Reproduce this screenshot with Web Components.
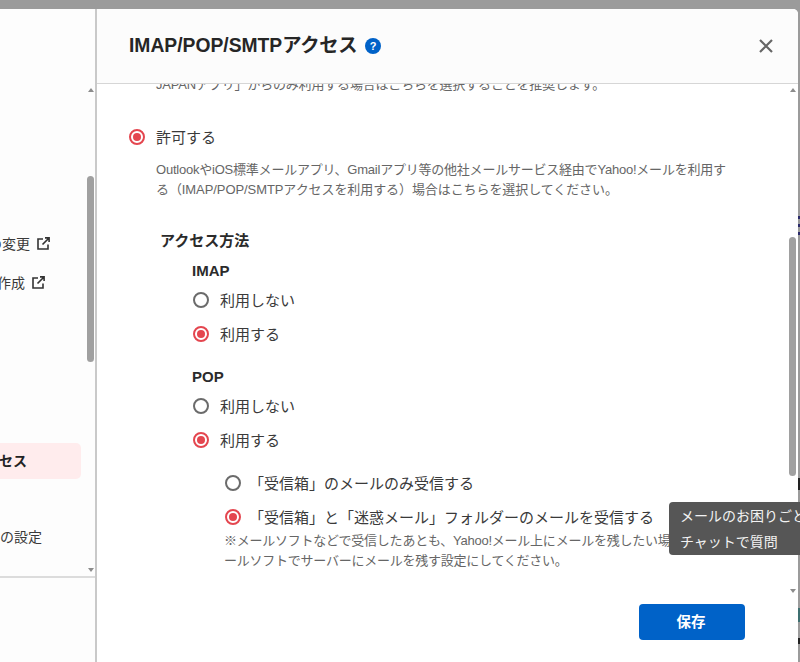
<!DOCTYPE html>
<html lang="ja">
<head>
<meta charset="utf-8">
<title>IMAP/POP/SMTPアクセス</title>
<style>
html, body { margin: 0; height: 100%; overflow: hidden; }
body { font-family: "Liberation Sans", "Noto Sans CJK JP", sans-serif; color: #333; }
</style>
</head>
<body>
<mail-shell>
  <side-nav slot="side">
    <nav-item end="30" top="149" link>メールアドレスの変更</nav-item>
    <nav-item end="25" top="19" link>エイリアスの作成</nav-item>
    <nav-item end="27" top="151" active>IMAP/POP/SMTPアクセス</nav-item>
    <nav-item end="42" top="47">そのほかの設定</nav-item>
  </side-nav>
  <access-dialog slot="main" heading="IMAP/POP/SMTP" heading-kana="アクセス">
    <div class="clipped">JAPANアプリ」からのみ利用する場合はこちらを選択することを推奨します。</div>
    <radio-row checked style="margin-top:25px">許可する</radio-row>
    <div class="desc"><span class="l1">OutlookやiOS標準メールアプリ、Gmailアプリ等の他社メールサービス経由でYahoo!メールを利用す</span><br><span class="l2">る（IMAP/POP/SMTPアクセスを利用する）場合はこちらを選択してください。</span></div>
    <div class="h-method">アクセス方法</div>
    <div class="h-proto" style="margin-top:6px">IMAP</div>
    <radio-row class="lv1">利用しない</radio-row>
    <radio-row class="lv1" checked>利用する</radio-row>
    <div class="h-proto" style="margin-top:14px">POP</div>
    <radio-row class="lv1">利用しない</radio-row>
    <radio-row class="lv1" checked>利用する</radio-row>
    <radio-row class="lv2" gap="8" style="margin-top:9px">「受信箱」のメールのみ受信する</radio-row>
    <radio-row class="lv2" gap="8" checked>「受信箱」と「迷惑メール」フォルダーのメールを受信する</radio-row>
    <div class="note">※メールソフトなどで受信したあとも、Yahoo!メール上にメールを残したい場合は、メ<br>ールソフトでサーバーにメールを残す設定にしてください。</div>
  </access-dialog>
  <chat-tip slot="tip"><div>メールのお困りごと</div><div>チャットで質問</div></chat-tip>
</mail-shell>

<script>
class MailShell extends HTMLElement {
    connectedCallback() {
        const shadow = this.attachShadow({ mode: 'open' });
        shadow.innerHTML = `
        <style>
        :host {
            display: block;
            position: relative;
            width: 800px;
            height: 662px;
            box-sizing: border-box;
            padding: 9px 2px 0 0;
            overflow: hidden;
            background:
                linear-gradient(#9b9b9b 216px, #2a2a6a 216px, #2a2a6a 219px, #9b9b9b 219px, #9b9b9b 224px, #2a2a6a 224px, #2a2a6a 227px, #9b9b9b 227px, #9b9b9b 232px, #2a2a6a 232px, #2a2a6a 235px, #9b9b9b 235px, #9b9b9b 478px, #222 478px, #222 490px, #9b9b9b 490px, #9b9b9b 608px, #3d6f70 608px, #3d6f70 622px, #9b9b9b 622px, #9b9b9b 638px, #222 638px, #222 644px, #9b9b9b 644px) right top / 2px 100% no-repeat,
                #9b9b9b;
        }
        .panel {
            display: flex;
            height: 100%;
            background: #fff;
            border-radius: 0 5px 0 0;
            overflow: hidden;
        }
        </style>
        <div class="panel"><slot name="side"></slot><slot name="main"></slot></div>
        <slot name="tip"></slot>`;
    }
}

class SideNav extends HTMLElement {
    connectedCallback() {
        const shadow = this.attachShadow({ mode: 'open' });
        shadow.innerHTML = `
        <style>
        :host {
            display: flex;
            flex-direction: column;
            flex: none;
            width: 97px;
            height: 100%;
            box-sizing: border-box;
            background: #fdfdfd;
            border-right: 2px solid #c9c9c9;
        }
        .scroll { display: flex; height: 494px; margin-top: 75px; border-bottom: 2px solid #dcdcdc; flex: none; box-sizing: border-box; }
        .list { flex: 1; min-width: 0; overflow: hidden; display: flex; flex-direction: column; }
        .foot { flex: 1; }
        </style>
        <div class="scroll">
            <div class="list"><slot></slot></div>
            <fake-scrollbar thumb-top="92" thumb-height="186" side="1"></fake-scrollbar>
        </div>
        <div class="foot"></div>`;
    }
}

class NavItem extends HTMLElement {
    connectedCallback() {
        const shadow = this.attachShadow({ mode: 'open' });
        const end = this.getAttribute('end') || '0';
        const active = this.hasAttribute('active');
        const right = active ? 81 : 87;
        shadow.innerHTML = `
        <style>
        :host { display: block; flex: none; margin-top: ${this.getAttribute('top') || 0}px; }
        .row {
            display: flex;
            justify-content: flex-end;
            align-items: center;
            gap: 7px;
            box-sizing: border-box;
            width: ${right}px;
            height: ${active ? 36 : 20}px;
            padding-right: ${right - Number(end) - (this.hasAttribute('link') ? 20 : 0)}px;
            white-space: nowrap;
            font-size: 14px;
            color: #3a3a3a;
        }
        .row.on { background: #ffeced; border-radius: 0 5px 5px 0; font-weight: bold; color: #222; padding-bottom: 3px; }
        svg { flex: none; }
        </style>
        <div class="row ${active ? 'on' : ''}">
            <span><slot></slot></span>
            ${this.hasAttribute('link') ? `<svg width="13" height="13" viewBox="0 0 13 13" fill="none" stroke="#333" stroke-width="1.6"><path d="M6 2H1v10h10V7.500"/><path d="M5.500 7.500 12 1M8 .9h4.100V5"/></svg>` : ''}
        </div>`;
    }
}

class FakeScrollbar extends HTMLElement {
    connectedCallback() {
        const shadow = this.attachShadow({ mode: 'open' });
        shadow.innerHTML = `
        <style>
        :host {
            display: flex;
            flex-direction: column;
            align-items: center;
            flex: none;
            width: 7px;
            height: 100%;
            margin-right: ${this.getAttribute('side') || 0}px;
            position: relative;
        }
        .up, .down { width: 0; height: 0; border-left: 3px solid transparent; border-right: 3px solid transparent; }
        .up { border-bottom: 4px solid #8c8c8c; margin-top: 4px; }
        .down { border-top: 4px solid #8c8c8c; margin-top: auto; margin-bottom: 4px; }
        .thumb { position: absolute; left: 0; width: 7px; border-radius: 4px; background: #a0a0a0; top: ${this.getAttribute('thumb-top')}px; height: ${this.getAttribute('thumb-height')}px; }
        </style>
        <div class="up"></div><div class="thumb"></div><div class="down"></div>`;
    }
}

class AccessDialog extends HTMLElement {
    connectedCallback() {
        const shadow = this.attachShadow({ mode: 'open' });
        shadow.innerHTML = `
        <style>
        :host { display: flex; flex-direction: column; flex: 1; min-width: 0; height: 100%; }
        header {
            display: flex;
            align-items: center;
            flex: none;
            height: 75px;
            box-sizing: border-box;
            padding: 0 25px 0 32px;
            background: #fcfcfc;
            border-bottom: 1px solid #d6d6d6;
        }
        h1 { margin: 0; font-size: 19.300px; font-weight: bold; color: #262626; line-height: 28px; white-space: nowrap; }
        h1 span { letter-spacing: -0.300px; }
        .help {
            display: flex; align-items: center; justify-content: center;
            width: 16px; height: 16px; margin-left: 8px; border-radius: 50%;
            background: #0062c8; color: #fff; font-size: 11px; font-weight: bold;
        }
        .close { margin-left: auto; display: block; }
        .body { display: flex; flex: none; height: 513px; }
        .content { flex: 1; min-width: 0; overflow: hidden; padding-left: 32px; font-size: 15px; color: #3a3a3a; }
        ::slotted(.clipped) { margin: -9px 0 0 27px; font-size: 13px; line-height: 20px; color: #666; white-space: nowrap; letter-spacing: -0.180px; }
        ::slotted(.desc) { margin: 6px 0 0 27px; font-size: 13px; line-height: 19.500px; color: #666; white-space: nowrap; }
        ::slotted(.h-method) { margin: 30px 0 0 31px; font-size: 15px; line-height: 24px; font-weight: bold; color: #2b2b2b; }
        ::slotted(.h-proto) { margin-left: 63px; font-size: 15px; line-height: 24px; font-weight: bold; color: #2b2b2b; }
        ::slotted(.lv1) { margin-left: 64px; }
        ::slotted(.lv2) { margin-left: 96px; }
        ::slotted(.note) { margin: -3px 0 0 95px; font-size: 13px; line-height: 20px; color: #666; white-space: nowrap; letter-spacing: -0.240px; }
        .foot { display: flex; justify-content: flex-end; flex: 1; padding: 7px 53px 0 0; }
        button {
            width: 106px; height: 36px; border: 0; border-radius: 4px; padding: 0 2px 4px 0;
            background: #0062c8; color: #fff; font: bold 14.500px "Liberation Sans", "Noto Sans CJK JP", sans-serif;
        }
        </style>
        <header>
            <h1>${this.getAttribute('heading')}<span>${this.getAttribute('heading-kana')}</span></h1>
            <span class="help">?</span>
            <svg class="close" width="14" height="14" viewBox="0 0 14 14" stroke="#666" stroke-width="2.200" fill="none"><path d="M1 1 13 13M13 1 1 13"/></svg>
        </header>
        <div class="body">
            <div class="content"><slot></slot></div>
            <fake-scrollbar thumb-top="153" thumb-height="239" side="2"></fake-scrollbar>
        </div>
        <div class="foot"><button>保存</button></div>`;
        // line widths differ a little from the source font
        this.querySelector('.desc .l1').style.letterSpacing = '-0.220px';
        this.querySelector('.desc .l2').style.letterSpacing = '-0.080px';
    }
}

class RadioRow extends HTMLElement {
    connectedCallback() {
        const shadow = this.attachShadow({ mode: 'open' });
        const checked = this.hasAttribute('checked');
        shadow.innerHTML = `
        <style>
        :host { display: flex; align-items: center; height: 34px; gap: ${this.getAttribute('gap') || 11}px; white-space: nowrap; }
        .mark {
            display: flex; align-items: center; justify-content: center; flex: none;
            width: 16px; height: 16px; box-sizing: border-box; border-radius: 50%;
            border: 2px solid ${checked ? '#e4464f' : '#6b6b6b'}; background: #fff;
        }
        .dot { width: 8px; height: 8px; border-radius: 50%; background: #e4464f; }
        .text { padding-bottom: 2px; }
        </style>
        <span class="mark">${checked ? '<span class="dot"></span>' : ''}</span>
        <span class="text"><slot></slot></span>`;
    }
}

class ChatTip extends HTMLElement {
    connectedCallback() {
        const shadow = this.attachShadow({ mode: 'open' });
        shadow.innerHTML = `
        <style>
        :host {
            position: absolute;
            left: 669px;
            right: 0;
            top: 502px;
            height: 53px;
            box-sizing: border-box;
            padding: 1px 0 0 11px;
            background: #565656;
            border-radius: 4px 0 0 4px;
            color: #f2f2f2;
            font-size: 14px;
            line-height: 26px;
            white-space: nowrap;
            overflow: hidden;
        }
        </style>
        <slot></slot>`;
    }
}

customElements.define('mail-shell', MailShell);
customElements.define('side-nav', SideNav);
customElements.define('nav-item', NavItem);
customElements.define('fake-scrollbar', FakeScrollbar);
customElements.define('access-dialog', AccessDialog);
customElements.define('radio-row', RadioRow);
customElements.define('chat-tip', ChatTip);
</script>
</body>
</html>
